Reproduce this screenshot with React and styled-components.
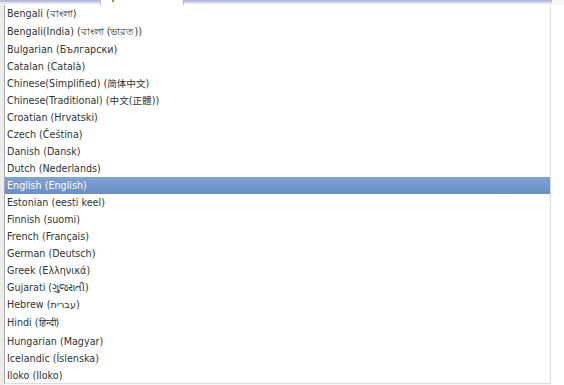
import React from "react";
import styled, { createGlobalStyle } from "styled-components";

const Global = createGlobalStyle`
  html, body { margin: 0; padding: 0; background: #ffffff; }
  body { font-family: "DejaVu Sans", "Noto Sans CJK SC", sans-serif; }
`;

const Page = styled.div`
  width: 564px;
  height: 385px;
  display: flex;
  flex-direction: column;
  overflow: hidden;
  background: #f6f6f6;
`;

const TopStrip = styled.div`
  height: 5px;
  display: flex;
  flex: none;
`;

const StripSeg = styled.div`
  width: ${(p) => p.$w}px;
  flex: ${(p) => (p.$grow ? "1" : "none")};
  background: ${(p) =>
    p.$tab
      ? "#ffffff"
      : "linear-gradient(#b9bad6 0, #b9bad6 2px, #dfe3f3 2px, #dfe3f3 4px, #ffffff 4px)"};
  border-left: ${(p) => (p.$tab ? "1px solid #b8b8b8" : "none")};
  border-right: ${(p) => (p.$tab ? "1px solid #b8b8b8" : "none")};
  position: relative;
`;

const Dot = styled.span`
  position: absolute;
  left: 11px;
  top: 0;
  width: 2px;
  height: 2px;
  background: #6ab04c;
`;

const Body = styled.div`
  flex: 1;
  display: flex;
  min-height: 0;
`;

const Gutter = styled.div`
  width: ${(p) => p.$w}px;
  flex: none;
  background: ${(p) => p.$bg};
`;

const List = styled.ul`
  margin: 0;
  padding: 0;
  list-style: none;
  width: 547px;
  flex: none;
  background: #ffffff;
  border-left: 1px solid #a9a9a9;
  border-right: 1px solid #dcdcdc;
  border-bottom: 1px solid #dcdcdc;
  box-sizing: border-box;
  overflow: hidden;
  height: 379px;
`;

const Row = styled.li`
  height: ${(p) => p.$h}px;
  line-height: 12px;
  flex: none;
  display: flex;
  align-items: center;
  padding-left: 2px;
  font-size: 9.6px;
  overflow: hidden;
  color: ${(p) => (p.$sel ? "#ffffff" : "#2e3436")};
  background: ${(p) =>
    p.$sel ? "linear-gradient(#80a2d4, #6a8fc6)" : "transparent"};
  white-space: nowrap;
`;

const langs = [
  ["Bengali (বাংলা)", 17],
  ["Bengali(India) (বাংলা (ভারত))", 19],
  ["Bulgarian (Български)", 17],
  ["Catalan (Català)", 17],
  ["Chinese(Simplified) (简体中文)", 17],
  ["Chinese(Traditional) (中文(正體))", 17],
  ["Croatian (Hrvatski)", 17],
  ["Czech (Čeština)", 17],
  ["Danish (Dansk)", 17],
  ["Dutch (Nederlands)", 17],
  ["English (English)", 17, true],
  ["Estonian (eesti keel)", 17],
  ["Finnish (suomi)", 17],
  ["French (Français)", 17],
  ["German (Deutsch)", 17],
  ["Greek (Ελληνικά)", 17],
  ["Gujarati (ગુજરાતી)", 17],
  ["Hebrew (עברית)", 17],
  ["Hindi (हिन्दी)", 20],
  ["Hungarian (Magyar)", 17],
  ["Icelandic (Íslenska)", 17],
  ["Iloko (Iloko)", 17],
];

export default function App() {
  return (
    <>
      <Global />
      <Page>
        <TopStrip>
          <StripSeg $w={100} />
          <StripSeg $w={82} $tab>
            <Dot />
          </StripSeg>
          <StripSeg $grow />
          <Gutter $w={12} $bg="#f6f6f6" />
        </TopStrip>
        <Body>
          <Gutter $w={4} $bg="#ececec" />
          <List>
            {langs.map(([t, h, sel]) => (
              <Row key={t} $h={h} $sel={sel}>
                {t}
              </Row>
            ))}
          </List>
          <Gutter $w={13} $bg="#ffffff" />
        </Body>
      </Page>
    </>
  );
}
